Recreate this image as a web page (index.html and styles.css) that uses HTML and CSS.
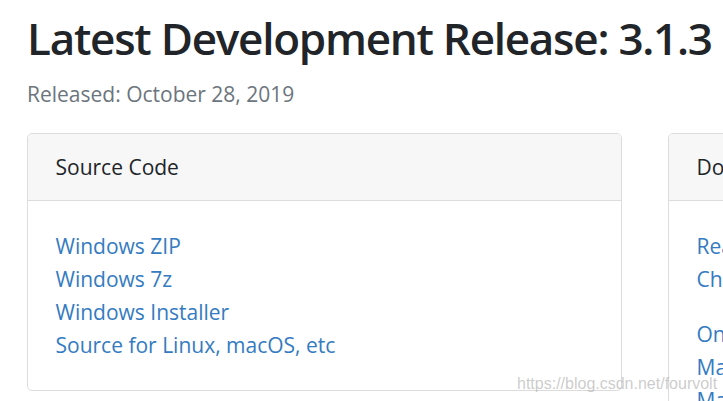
FILE: index.html
```html
<!DOCTYPE html>
<html lang="en">
<head>
<meta charset="utf-8">
<title>Latest Development Release</title>
<link rel="stylesheet" href="styles.css">
</head>
<body>
<main class="page">
  <h1 class="title">Latest Development Release: 3.1.3</h1>
  <p class="released">Released: October 28, 2019</p>
  <div class="row">
    <section class="card">
      <div class="card-header">Source Code</div>
      <div class="card-body">
        <ul class="links">
          <li><a href="#">Windows ZIP</a></li>
          <li><a href="#">Windows 7z</a></li>
          <li><a href="#">Windows Installer</a></li>
          <li><a href="#">Source for Linux, macOS, etc</a></li>
        </ul>
      </div>
    </section>
    <section class="card">
      <div class="card-header">Documentation</div>
      <div class="card-body">
        <ul class="links group">
          <li><a href="#">ReadMe</a></li>
          <li><a href="#">ChangeLog</a></li>
        </ul>
        <ul class="links">
          <li><a href="#">Online Documentation</a></li>
          <li><a href="#">Manual (HTML)</a></li>
          <li><a href="#">Manual (CHM)</a></li>
        </ul>
      </div>
    </section>
  </div>
</main>
<div class="watermark">https://blog.csdn.net/fourvolt</div>
</body>
</html>
```

FILE: styles.css
```css
html, body {
  margin: 0;
  padding: 0;
  background: #ffffff;
  overflow: hidden;
}

body {
  font-family: "Open Sans", "Noto Sans", sans-serif;
  color: #212529;
  width: 723px;
  height: 401px;
  position: relative;
}

.page {
  padding: 11px 0 0 27px;
}

.title {
  margin: 0 0 13px;
  font-size: 44px;
  line-height: 55px;
  font-weight: 600;
  letter-spacing: -1.25px;
  color: #212529;
  white-space: nowrap;
}

.released {
  margin: 0 0 24px;
  font-size: 21px;
  line-height: 30px;
  color: #6c757d;
}

.row {
  display: flex;
  align-items: flex-start;
  gap: 46px;
  width: 1300px;
}

.card {
  flex: 0 0 595px;
  box-sizing: border-box;
  border: 1px solid #dcdcdc;
  border-radius: 5px;
  background: #ffffff;
  overflow: hidden;
}

.card-header {
  background: #f7f7f7;
  border-bottom: 1px solid #dcdcdc;
  padding: 16.5px 27.5px;
  font-size: 21px;
  line-height: 33px;
  color: #212529;
}

.card-body {
  padding: 28.5px 27.5px 28px;
}

.links {
  list-style: none;
  margin: 0;
  padding: 0;
  font-size: 21px;
  line-height: 33px;
}

.links.group {
  margin-bottom: 22px;
}

.links a {
  color: #347bc1;
  text-decoration: none;
  white-space: nowrap;
}

.watermark {
  position: absolute;
  left: 517px;
  top: 374px;
  font-family: "Liberation Sans", Arial, sans-serif;
  font-size: 16px;
  line-height: 20px;
  color: rgba(170, 170, 170, 0.6);
  white-space: nowrap;
}
```
